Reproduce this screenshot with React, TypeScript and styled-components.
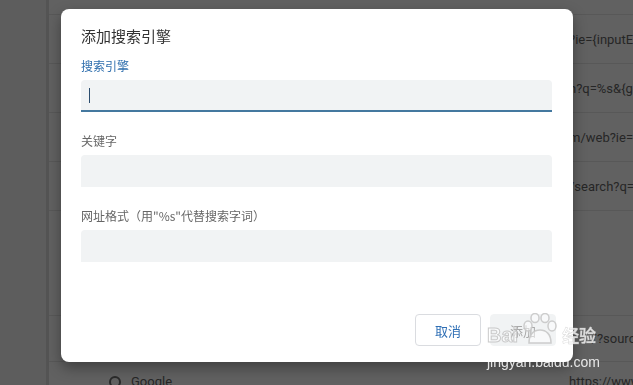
import styled, { createGlobalStyle } from "styled-components";

const GlobalStyle = createGlobalStyle`
  html, body {
    margin: 0;
    padding: 0;
    width: 633px;
    height: 385px;
    overflow: hidden;
    background: #616161;
  }
  * {
    box-sizing: border-box;
  }
`;

const Page = styled.div`
  display: flex;
  width: 633px;
  height: 385px;
  font-family: Roboto, "Noto Sans CJK SC", sans-serif;
`;

const Sidebar = styled.div`
  width: 49px;
  flex-shrink: 0;
  background: #5d5d5d;
  border-right: 3px solid #545454;
`;

const Main = styled.div`
  flex: 1;
  padding-top: 14px;
  overflow: hidden;
`;

const Row = styled.div<{ h?: number }>`
  display: flex;
  align-items: center;
  height: ${({ h }) => h || 49}px;
  border-top: 1px solid #585858;
  white-space: nowrap;
  font-size: 13px;
  color: #262626;
`;

const Gap = styled.div`
  height: 56px;
`;

const Name = styled.div`
  display: flex;
  align-items: center;
  gap: 10px;
  width: 520px;
  padding-left: 60px;
  flex-shrink: 0;
`;

const Url = styled.div`
  flex-shrink: 0;
`;

const Globe = styled.span`
  width: 12px;
  height: 12px;
  border-radius: 50%;
  border: 2px solid #2a2a2a;
`;

const Backdrop = styled.div`
  position: fixed;
  inset: 0;
`;

const Dialog = styled.div`
  position: absolute;
  left: 61px;
  top: 9px;
  width: 512px;
  height: 353px;
  background: #fff;
  border-radius: 8px;
  box-shadow: 0 6px 14px rgba(0, 0, 0, 0.35);
  padding: 15px 21px 16px 20px;
  display: flex;
  flex-direction: column;
  font-family: "Noto Sans CJK SC", "Liberation Sans", sans-serif;
`;

const Title = styled.div`
  font-size: 15px;
  line-height: 24px;
  color: #333;
  margin-bottom: 10px;
`;

const Field = styled.div`
  display: flex;
  flex-direction: column;
  margin-bottom: 21px;
`;

const Label = styled.div<{ active?: boolean }>`
  font-size: 12px;
  line-height: 16px;
  color: ${({ active }) => (active ? "#2f6fae" : "#666")};
  margin-bottom: 6px;
`;

const Input = styled.div<{ active?: boolean }>`
  height: 32px;
  background: #f1f3f4;
  border-radius: 4px 4px 0 0;
  border-bottom: 2px solid ${({ active }) => (active ? "#44789f" : "transparent")};
  display: flex;
  align-items: center;
  padding-left: 8px;
`;

const Caret = styled.span`
  width: 1px;
  height: 15px;
  background: #2c4d6e;
`;

const Footer = styled.div`
  margin-top: auto;
  margin-right: -4px;
  display: flex;
  justify-content: flex-end;
  gap: 9px;
`;

const Button = styled.button<{ primary?: boolean }>`
  width: 66px;
  height: 32px;
  border-radius: 4px;
  font-family: "Noto Sans CJK SC", sans-serif;
  font-size: 13px;
  border: 1px solid ${({ primary }) => (primary ? "#f1f3f4" : "#dadce0")};
  background: ${({ primary }) => (primary ? "#f1f3f4" : "#fff")};
  color: ${({ primary }) => (primary ? "#a8a8a8" : "#2f6fb5")};
`;

const Watermark = styled.div`
  position: absolute;
  left: 487px;
  top: 313px;
  display: flex;
  flex-direction: column;
  align-items: flex-start;
  pointer-events: none;
`;

const MarkTop = styled.div`
  display: flex;
  align-items: flex-end;
  gap: 2px;
`;

const MarkBai = styled.span`
  font-family: "Liberation Sans", sans-serif;
  font-size: 20px;
  font-weight: bold;
  color: rgba(255, 255, 255, 0.6);
  -webkit-text-stroke: 1px rgba(190, 190, 190, 0.8);
  line-height: 20px;
`;

const MarkCn = styled.span`
  font-family: "Noto Sans CJK SC", sans-serif;
  font-size: 17px;
  font-weight: bold;
  color: rgba(255, 255, 255, 0.8);
  -webkit-text-stroke: 0.5px rgba(190, 190, 190, 0.6);
  line-height: 20px;
`;

const MarkUrl = styled.div`
  font-family: "Liberation Sans", sans-serif;
  font-size: 14px;
  margin-top: 9px;
  color: rgba(255, 255, 255, 0.85);
`;

const Paw = () => (
  <svg width="40" height="32" viewBox="0 0 40 32" fill="rgba(255,255,255,0.5)" stroke="rgba(200,200,200,0.9)" strokeWidth="1.5">
    <ellipse cx="8" cy="13" rx="4" ry="5" />
    <ellipse cx="15" cy="5" rx="4" ry="4.5" />
    <ellipse cx="25" cy="5" rx="4" ry="4.5" />
    <ellipse cx="32" cy="13" rx="4" ry="5" />
    <path d="M9 30 C9 21 14 17 20 17 C26 17 31 21 31 30 Z" />
  </svg>
);

const rows = [
  "?ie={inputEncoding}&wd=%s",
  "h?q=%s&{google:RLZ}",
  "m/web?ie={inputEncoding}&query=%s",
  "/search?q=%s",
  "",
];

export default function App() {
  return (
    <>
      <GlobalStyle />
      <Page>
        <Sidebar />
        <Main>
          {rows.map((u, i) => (
            <Row key={i}>
              <Name />
              <Url>{u}</Url>
            </Row>
          ))}
          <Gap />
          <Row h={46}>
            <Name />
            <Url>&nbsp;&nbsp;&nbsp;&nbsp;&nbsp;&nbsp;&nbsp;/?source=chrome</Url>
          </Row>
          <Row h={40}>
            <Name>
              <Globe />
              Google
            </Name>
            <Url>https://www.google.com/search</Url>
          </Row>
        </Main>
      </Page>
      <Backdrop>
        <Dialog>
          <Title>添加搜索引擎</Title>
          <Field>
            <Label active>搜索引擎</Label>
            <Input active>
              <Caret />
            </Input>
          </Field>
          <Field>
            <Label>关键字</Label>
            <Input />
          </Field>
          <Field>
            <Label>网址格式（用"%s"代替搜索字词）</Label>
            <Input />
          </Field>
          <Footer>
            <Button>取消</Button>
            <Button primary>添加</Button>
          </Footer>
        </Dialog>
        <Watermark>
          <MarkTop>
            <MarkBai>Bai</MarkBai>
            <Paw />
            <MarkCn>经验</MarkCn>
          </MarkTop>
          <MarkUrl>jingyan.baidu.com</MarkUrl>
        </Watermark>
      </Backdrop>
    </>
  );
}
